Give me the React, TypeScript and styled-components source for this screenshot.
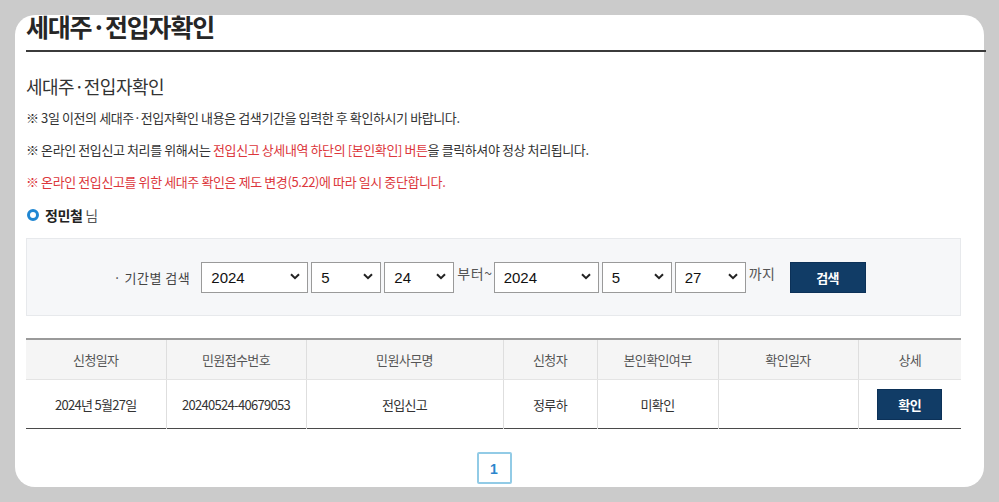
import styled, { createGlobalStyle } from "styled-components";

const GlobalStyle = createGlobalStyle`
  html, body {
    margin: 0;
    padding: 0;
    background: #cbcbcb;
  }
  body {
    font-family: "Noto Sans CJK KR", "Noto Sans", sans-serif;
    color: #333;
  }
`;

const Card = styled.div`
  display: flow-root;
  box-sizing: border-box;
  margin: 15px 15px 0 15px;
  width: 969px;
  height: 472px;
  background: #fff;
  border-radius: 20px;
  padding: 0 23px 0 11px;
`;

const PageTitle = styled.h1`
  margin: -4px -25px 0 0;
  padding: 0 0 9px 0;
  font-size: 25px;
  line-height: 30px;
  font-weight: 700;
  letter-spacing: -1.2px;
  color: #262626;
  border-bottom: 2px solid #3b3b3b;
`;

const SubTitle = styled.h2`
  margin: 22px 0 0 0;
  font-size: 18px;
  line-height: 24px;
  font-weight: 400;
  letter-spacing: -0.5px;
  color: #333;
`;

const Notes = styled.ul`
  list-style: none;
  margin: 11px 0 0 0;
  padding: 0;
  display: flex;
  flex-direction: column;
  gap: 14px;
`;

const Note = styled.li<{ $red?: boolean }>`
  font-size: 13px;
  line-height: 18px;
  letter-spacing: -0.4px;
  color: ${({ $red }) => ($red ? "#dc373c" : "#333")};
`;

const Red = styled.span`
  color: #dc373c;
`;

const NameRow = styled.div`
  display: flex;
  align-items: center;
  gap: 6px;
  margin: 14px 0 0 1px;
  font-size: 14px;
  line-height: 20px;
  letter-spacing: -0.4px;
  color: #555;

  b {
    color: #222;
    font-weight: 700;
  }
`;

const Ring = styled.span`
  box-sizing: border-box;
  width: 12px;
  height: 12px;
  border-radius: 50%;
  border: 3px solid #1f86d2;
`;

const SearchBox = styled.div`
  box-sizing: border-box;
  margin-top: 13px;
  height: 78px;
  background: #f6f7f9;
  border: 1px solid #e7e9ec;
  display: flex;
  align-items: center;
  justify-content: center;
  padding-right: 8px;
`;

const SearchLabel = styled.span`
  font-size: 13px;
  letter-spacing: 0.5px;
  color: #444;
  margin-right: 11px;
`;

const SelectWrap = styled.div<{ $w: number }>`
  position: relative;
  width: ${({ $w }) => $w}px;
  height: 31px;
  margin-right: 3px;

  svg {
    position: absolute;
    right: 8px;
    top: 11px;
    pointer-events: none;
  }
`;

const Select = styled.select`
  appearance: none;
  box-sizing: border-box;
  width: 100%;
  height: 100%;
  border: 1px solid #9a9a9a;
  border-radius: 0;
  background: #fff;
  padding: 0 0 0 9px;
  font-family: "Liberation Sans", Arial, sans-serif;
  font-size: 15px;
  color: #111;
`;

const Joint = styled.span<{ $gap?: number }>`
  align-self: flex-start;
  margin-top: 24px;
  font-size: 14px;
  letter-spacing: 0.6px;
  color: #555;
  margin-right: ${({ $gap }) => $gap ?? 1}px;
`;

const NavyButton = styled.button<{ $w: number }>`
  width: ${({ $w }) => $w}px;
  height: 31px;
  border: 1px solid #0c3158;
  background: #113c66;
  color: #fff;
  font-family: "Noto Sans CJK KR", sans-serif;
  font-size: 13px;
  font-weight: 700;
  letter-spacing: -0.5px;
  padding: 0;
  cursor: pointer;
`;

const Table = styled.table`
  margin-top: 22px;
  width: 935px;
  border-collapse: collapse;
  table-layout: fixed;
  border-top: 2px solid #9a9a9a;
  border-bottom: 1px solid #4a4a4a;

  th,
  td {
    padding: 0;
  }

  th {
    height: 39px;
    background: #f5f5f5;
    font-weight: 400;
    font-size: 13px;
    color: #555;
    letter-spacing: -0.6px;
    border-bottom: 1px solid #e4e4e4;
  }

  td {
    height: 48px;
    font-size: 13px;
    color: #333;
    letter-spacing: -0.7px;
    text-align: center;
  }

  th + th,
  td + td {
    border-left: 1px solid #dedede;
  }
`;

const Pager = styled.div`
  display: flex;
  justify-content: center;
  margin-top: 23px;
  padding-left: 1px;
`;

const PageNum = styled.span`
  box-sizing: border-box;
  width: 35px;
  height: 32px;
  border: 2px solid #92cbe6;
  border-radius: 2px;
  display: flex;
  align-items: center;
  justify-content: center;
  padding-top: 2px;
  font-family: "Liberation Sans", Arial, sans-serif;
  font-size: 14px;
  font-weight: 700;
  color: #2b86cc;
`;

const Chevron = () => (
  <svg width="10" height="7" viewBox="0 0 10 7">
    <path d="M1 1.2 5 5.2 9 1.2" fill="none" stroke="#222" strokeWidth="2" />
  </svg>
);

function DateSelect({ w, value, options }: { w: number; value: string; options: string[] }) {
  return (
    <SelectWrap $w={w}>
      <Select defaultValue={value}>
        {options.map((o) => (
          <option key={o}>{o}</option>
        ))}
      </Select>
      <Chevron />
    </SelectWrap>
  );
}

const years = ["2023", "2024"];
const months = Array.from({ length: 12 }, (_, i) => String(i + 1));
const days = Array.from({ length: 31 }, (_, i) => String(i + 1));

const columns = [
  { label: "신청일자", w: 140 },
  { label: "민원접수번호", w: 140 },
  { label: "민원사무명", w: 197 },
  { label: "신청자", w: 94 },
  { label: "본인확인여부", w: 121 },
  { label: "확인일자", w: 140 },
  { label: "상세", w: 103 },
];

export default function App() {
  return (
    <>
      <GlobalStyle />
      <Card>
        <PageTitle>세대주·전입자확인</PageTitle>
        <SubTitle>세대주·전입자확인</SubTitle>
        <Notes>
          <Note>※ 3일 이전의 세대주·전입자확인 내용은 검색기간을 입력한 후 확인하시기 바랍니다.</Note>
          <Note>
            ※ 온라인 전입신고 처리를 위해서는 <Red>전입신고 상세내역 하단의 [본인확인] 버튼</Red>을 클릭하셔야 정상
            처리됩니다.
          </Note>
          <Note $red>※ 온라인 전입신고를 위한 세대주 확인은 제도 변경(5.22)에 따라 일시 중단합니다.</Note>
        </Notes>
        <NameRow>
          <Ring />
          <span>
            <b>정민철</b> 님
          </span>
        </NameRow>
        <SearchBox>
          <SearchLabel>· 기간별 검색</SearchLabel>
          <DateSelect w={107} value="2024" options={years} />
          <DateSelect w={70} value="5" options={months} />
          <DateSelect w={70} value="24" options={days} />
          <Joint>부터~</Joint>
          <DateSelect w={105} value="2024" options={years} />
          <DateSelect w={70} value="5" options={months} />
          <DateSelect w={71} value="27" options={days} />
          <Joint $gap={14}>까지</Joint>
          <NavyButton $w={76}>검색</NavyButton>
        </SearchBox>
        <Table>
          <colgroup>
            {columns.map((c) => (
              <col key={c.label} style={{ width: c.w }} />
            ))}
          </colgroup>
          <thead>
            <tr>
              {columns.map((c) => (
                <th key={c.label}>{c.label}</th>
              ))}
            </tr>
          </thead>
          <tbody>
            <tr>
              <td>2024년 5월27일</td>
              <td>20240524-40679053</td>
              <td>전입신고</td>
              <td>정루하</td>
              <td>미확인</td>
              <td></td>
              <td>
                <NavyButton $w={65}>확인</NavyButton>
              </td>
            </tr>
          </tbody>
        </Table>
        <Pager>
          <PageNum>1</PageNum>
        </Pager>
      </Card>
    </>
  );
}
